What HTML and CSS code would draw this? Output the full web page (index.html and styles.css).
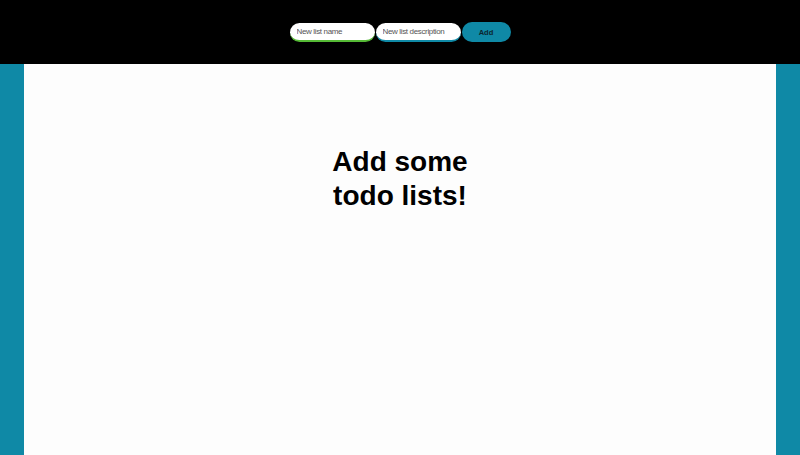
FILE: index.html
```html
<!DOCTYPE html>
<html>
<head>
<meta charset="utf-8">
<link rel="stylesheet" href="styles.css">
</head>
<body>
<header class="topbar">
  <form class="new-list">
    <input class="field field-name" type="text" placeholder="New list name">
    <input class="field field-desc" type="text" placeholder="New list description">
    <button class="add-btn" type="button">Add</button>
  </form>
</header>
<main class="content">
  <h1 class="empty-title">Add some todo lists!</h1>
</main>
</body>
</html>
```
FILE: styles.css
```css
html, body {
  margin: 0;
  padding: 0;
  height: 100%;
}
body {
  background: #0f89a6;
  font-family: "Liberation Sans", Arial, sans-serif;
  display: flex;
  flex-direction: column;
}
.topbar {
  background: #000;
  height: 64px;
  display: flex;
  align-items: center;
  justify-content: center;
  flex-shrink: 0;
}
.new-list {
  display: flex;
  align-items: center;
  gap: 1px;
}
.field {
  box-sizing: border-box;
  width: 85px;
  height: 19px;
  border: none;
  border-radius: 10px;
  background: #fff;
  padding: 0 7px;
  font-family: "Liberation Sans", Arial, sans-serif;
  font-size: 8px;
  letter-spacing: -0.35px;
  color: #333;
  outline: none;
}
.field::placeholder {
  color: #555;
}
.field-name {
  border-bottom: 2px solid #55b935;
}
.field-desc {
  border-bottom: 2px solid #0f89a6;
}
.add-btn {
  box-sizing: border-box;
  width: 49px;
  height: 20px;
  border: none;
  border-radius: 10px;
  background: #0f89a6;
  color: #0b2630;
  font-family: "Liberation Sans", Arial, sans-serif;
  font-weight: bold;
  font-size: 7.5px;
  padding: 0;
}
.content {
  flex: 1;
  background: #fdfdfd;
  margin: 0 24px;
  padding-top: 81px;
  display: flex;
  flex-direction: column;
  align-items: center;
}
.empty-title {
  margin: 0;
  width: 160px;
  text-align: center;
  font-size: 28px;
  line-height: 34px;
  font-weight: bold;
  color: #000;
}
```
